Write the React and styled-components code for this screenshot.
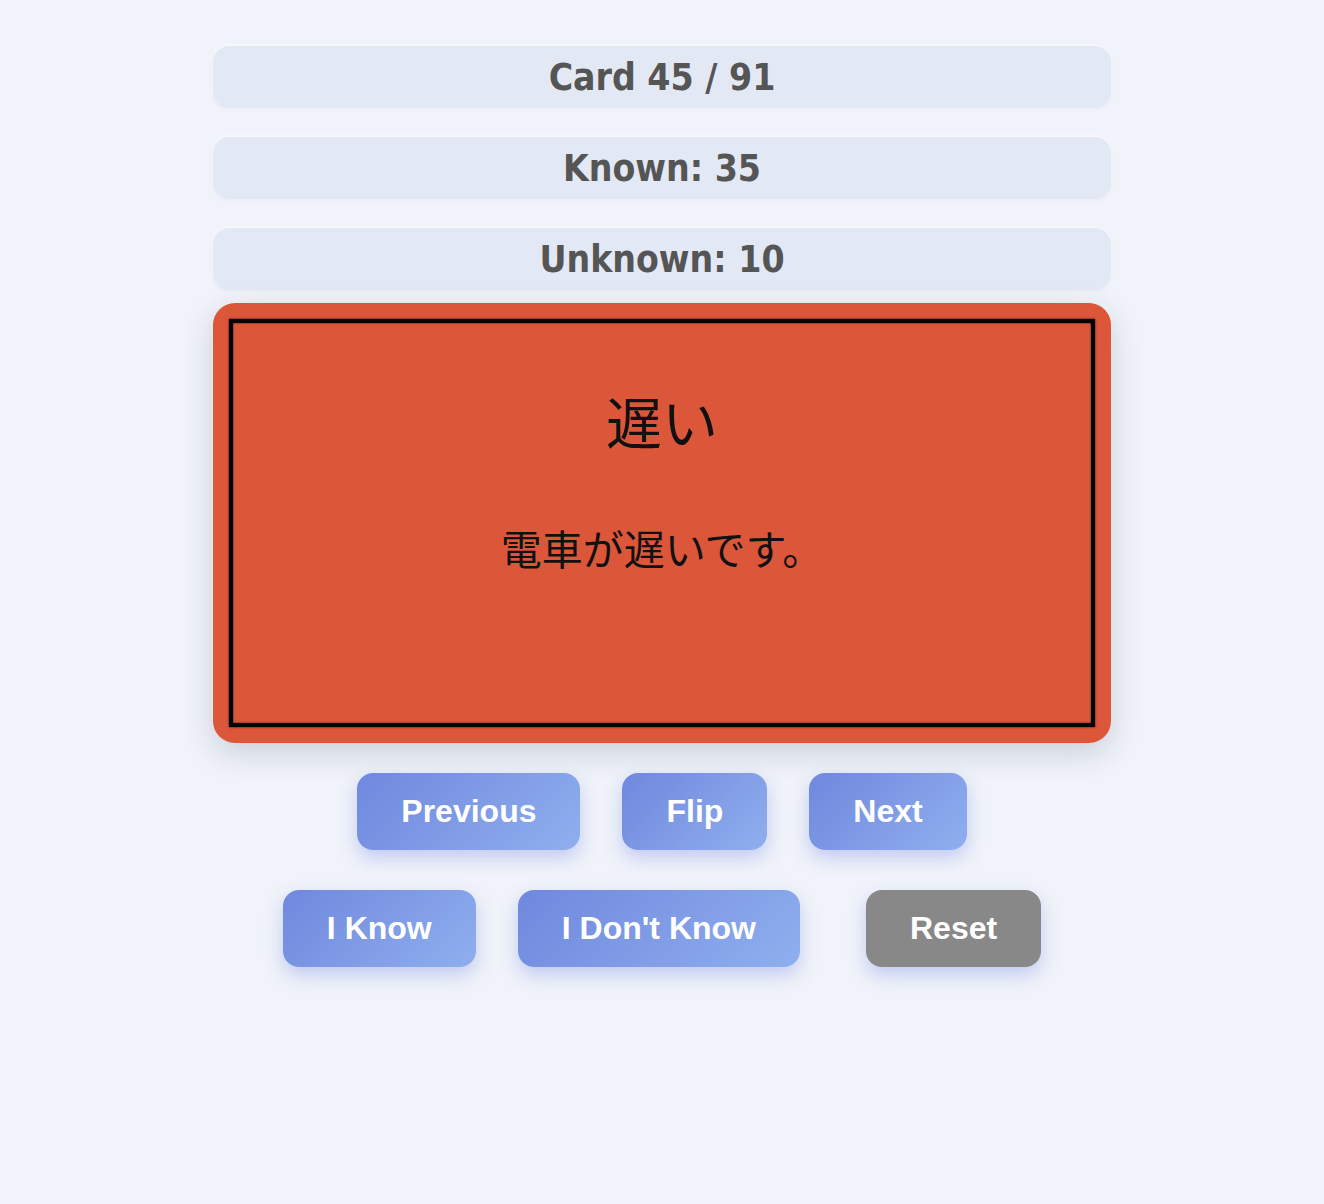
import React from "react";
import styled, { createGlobalStyle } from "styled-components";

const Global = createGlobalStyle`
  html, body { margin: 0; padding: 0; background: #f0f3f9; }
  body { font-family: "Liberation Sans", Arial, sans-serif; }
`;

const Page = styled.div`
  min-height: 1204px;
  display: flex;
  flex-direction: column;
  align-items: center;
  padding-top: 46px;
  box-sizing: border-box;
`;

const Column = styled.div`
  width: 898px;
  display: flex;
  flex-direction: column;
`;

const Stat = styled.div`
  height: 62px;
  border-radius: 16px;
  background: #e3e8f5;
  box-shadow: 0 -1px 3px rgba(255, 255, 255, 0.8), 0 1px 3px rgba(200, 208, 230, 0.25);
  display: flex;
  align-items: center;
  justify-content: center;
  font-family: "DejaVu Sans Condensed", "DejaVu Sans", sans-serif;
  font-stretch: condensed;
  font-weight: bold;
  font-size: 37px;
  color: #555555;
  margin-bottom: ${(p) => p.$mb}px;
`;

const Card = styled.div`
  height: 440px;
  box-sizing: border-box;
  border-radius: 22px;
  background: #dc563a;
  padding: 16px;
  box-shadow: 0 10px 30px rgba(40, 50, 80, 0.18);
`;

const Inner = styled.div`
  height: 100%;
  box-sizing: border-box;
  border: 4px solid #000;
  box-shadow: 0 0 2px rgba(0, 0, 0, 0.8), inset 0 0 2px rgba(0, 0, 0, 0.8);
  display: flex;
  flex-direction: column;
  align-items: center;
  padding-top: 67px;
  font-family: "Noto Sans CJK JP", "Noto Sans", sans-serif;
  color: #111;
`;

const Word = styled.div`
  font-size: 56px;
  line-height: 60px;
`;

const Sentence = styled.div`
  margin-top: 73px;
  font-size: 41px;
  line-height: 48px;
`;

const Row = styled.div`
  display: flex;
  justify-content: center;
  gap: 42px;
  margin-top: ${(p) => p.$mt}px;
`;

const Button = styled.button`
  border: none;
  border-radius: 16px;
  padding: 20px 44px;
  font-family: "Liberation Sans", Arial, sans-serif;
  font-weight: bold;
  font-size: 32px;
  line-height: 37px;
  color: #ffffff;
  cursor: pointer;
  background: ${(p) =>
    p.$gray ? "#888888" : "linear-gradient(135deg, #7088de 0%, #8fafee 100%)"};
  box-shadow: 0 8px 18px rgba(110, 130, 230, 0.35);
  margin-left: ${(p) => p.$ml || 0}px;
`;

export default function App() {
  return (
    <>
      <Global />
      <Page>
        <Column>
          <Stat $mb={29}>Card 45 / 91</Stat>
          <Stat $mb={29}>Known: 35</Stat>
          <Stat $mb={13}>Unknown: 10</Stat>
          <Card>
            <Inner>
              <Word>遅い</Word>
              <Sentence>電車が遅いです。</Sentence>
            </Inner>
          </Card>
        </Column>
        <Row $mt={30}>
          <Button>Previous</Button>
          <Button>Flip</Button>
          <Button>Next</Button>
        </Row>
        <Row $mt={40}>
          <Button>I Know</Button>
          <Button>I Don't Know</Button>
          <Button $gray $ml={24}>Reset</Button>
        </Row>
      </Page>
    </>
  );
}
